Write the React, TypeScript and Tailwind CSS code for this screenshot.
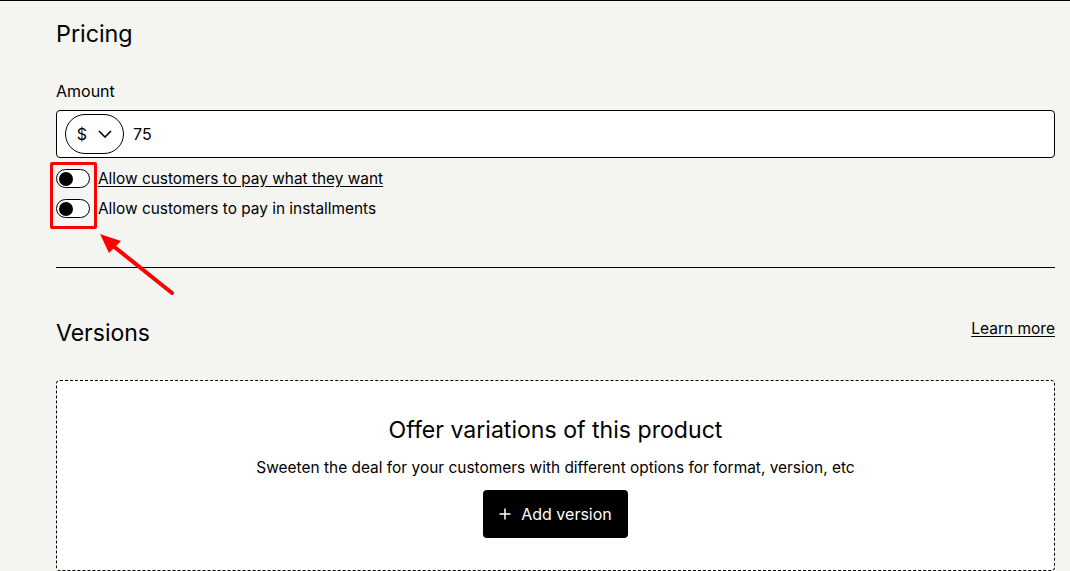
import React from "react";

function Toggle() {
  return (
    <span className="relative inline-flex h-[19px] w-[34px] shrink-0 items-center rounded-full border border-black bg-white">
      <span className="ml-[2px] h-[14px] w-[14px] rounded-full bg-black" />
    </span>
  );
}

export default function App() {
  return (
    <div
      className="relative min-h-[571px] w-full overflow-hidden border-t border-black bg-[#f4f4f0] text-black"
      style={{ fontFamily: "Inter, 'Noto Sans', sans-serif" }}
    >
      <div className="pl-[56px] pr-[15px]">
        <section className="pt-[17px] pb-[49px]">
          <h2 className="text-[23.3px] leading-[32px]">Pricing</h2>
          <div className="mt-[29px] text-[16px] leading-[24px]">Amount</div>
          <div className="mt-[7px] flex h-[48px] items-center rounded-[4px] border border-black bg-white pl-[8px]">
            <div className="flex h-[40px] w-[59px] items-center justify-center gap-[11px] rounded-full border border-black">
              <span className="text-[16px] leading-none">$</span>
              <svg width="14" height="8" viewBox="0 0 14 8" fill="none">
                <path d="M1 1L7 7L13 1" stroke="black" strokeWidth="1.6" />
              </svg>
            </div>
            <span className="ml-[9px] text-[16px]">75</span>
          </div>
          <div className="mt-[11px] flex flex-col gap-[11px]">
            <label className="flex h-[19px] items-center gap-[8px]">
              <Toggle />
              <span className="text-[15.4px] leading-[19px] underline underline-offset-2">
                Allow customers to pay what they want
              </span>
            </label>
            <label className="flex h-[19px] items-center gap-[8px]">
              <Toggle />
              <span className="text-[15.4px] leading-[19px]">
                Allow customers to pay in installments
              </span>
            </label>
          </div>
        </section>
        <div className="h-px bg-black" />
        <section className="pt-[49px]">
          <div className="flex items-start justify-between">
            <h2 className="text-[23px] leading-[32px]">Versions</h2>
            <a className="text-[15.5px] leading-[24px] underline underline-offset-2">Learn more</a>
          </div>
          <div className="mt-[31px] flex flex-col items-center rounded-[4px] border border-dashed border-black bg-white px-8 pt-[33px] pb-[32px]">
            <h3 className="text-[23.1px] leading-[32px]">Offer variations of this product</h3>
            <p className="mt-[10px] text-[15.45px] leading-[24px]">
              Sweeten the deal for your customers with different options for format, version, etc
            </p>
            <button className="mt-[10px] flex h-[48px] w-[145px] items-center justify-center gap-[10px] rounded-[4px] bg-black text-[16px] text-white">
              <svg width="12" height="12" viewBox="0 0 12 12" fill="none">
                <path d="M6 0.5V11.5M0.5 6H11.5" stroke="white" strokeWidth="1.5" />
              </svg>
              Add version
            </button>
          </div>
        </section>
      </div>

      {/* annotation overlay */}
      <div className="pointer-events-none absolute left-[50px] top-[161px] h-[67px] w-[47px] rounded-[2px] border-[3px] border-[#ff0000]" />
      <svg
        className="pointer-events-none absolute left-0 top-0"
        width="1070"
        height="571"
        viewBox="0 0 1070 571"
      >
        <line x1="172" y1="292" x2="112" y2="244" stroke="#ff0000" strokeWidth="4" strokeLinecap="round" />
        <polygon points="100,233 121,240 109,252" fill="#ff0000" />
      </svg>
    </div>
  );
}
